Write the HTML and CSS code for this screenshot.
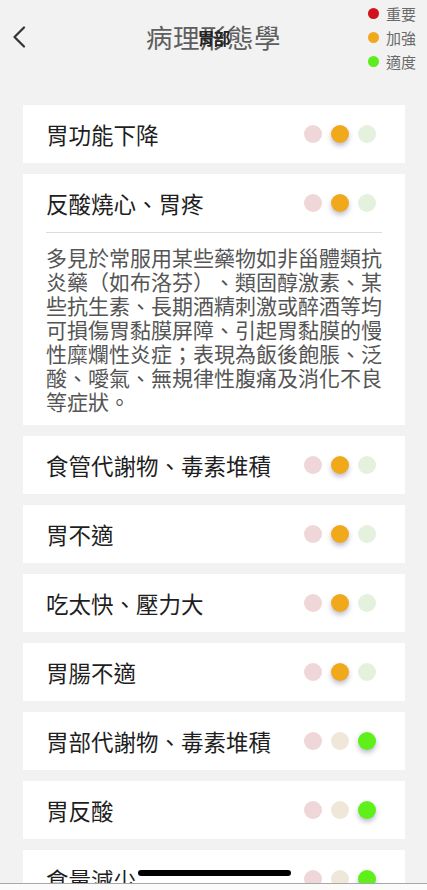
FILE: index.html
```html
<!DOCTYPE html>
<html lang="zh-Hant">
<head>
<meta charset="utf-8">
<link rel="stylesheet" href="styles.css">
</head>
<body>
<div class="screen">
  <header class="header">
    <button class="back" aria-label="back">
      <svg width="14" height="22" viewBox="0 0 14 22"><path d="M12 1.5 L2.5 11 L12 20.5" fill="none" stroke="#333" stroke-width="2.2" stroke-linecap="round" stroke-linejoin="round"/></svg>
    </button>
    <div class="title-wrap">
      <span class="title">病理形態學</span>
      <span class="subtitle">胃部</span>
    </div>
    <ul class="legend">
      <li><span class="ldot red"></span>重要</li>
      <li><span class="ldot orange"></span>加強</li>
      <li><span class="ldot green"></span>適度</li>
    </ul>
  </header>

  <main class="list">
    <section class="card">
      <div class="row"><span class="name">胃功能下降</span><span class="dots"><i class="d r"></i><i class="d o on"></i><i class="d g"></i></span></div>
    </section>
    <section class="card">
      <div class="row"><span class="name">反酸燒心、胃疼</span><span class="dots"><i class="d r"></i><i class="d o on"></i><i class="d g"></i></span></div>
      <div class="divider"></div>
      <p class="desc">多見於常服用某些藥物如非甾體類抗炎藥（如布洛芬）、類固醇激素、某些抗生素、長期酒精刺激或醉酒等均可損傷胃黏膜屏障、引起胃黏膜的慢性糜爛性炎症；表現為飯後飽脹、泛酸、噯氣、無規律性腹痛及消化不良等症狀。</p>
    </section>
    <section class="card">
      <div class="row"><span class="name">食管代謝物、毒素堆積</span><span class="dots"><i class="d r"></i><i class="d o on"></i><i class="d g"></i></span></div>
    </section>
    <section class="card">
      <div class="row"><span class="name">胃不適</span><span class="dots"><i class="d r"></i><i class="d o on"></i><i class="d g"></i></span></div>
    </section>
    <section class="card">
      <div class="row"><span class="name">吃太快、壓力大</span><span class="dots"><i class="d r"></i><i class="d o on"></i><i class="d g"></i></span></div>
    </section>
    <section class="card">
      <div class="row"><span class="name">胃腸不適</span><span class="dots"><i class="d r"></i><i class="d o on"></i><i class="d g"></i></span></div>
    </section>
    <section class="card">
      <div class="row"><span class="name">胃部代謝物、毒素堆積</span><span class="dots"><i class="d r"></i><i class="d o"></i><i class="d g on"></i></span></div>
    </section>
    <section class="card">
      <div class="row"><span class="name">胃反酸</span><span class="dots"><i class="d r"></i><i class="d o"></i><i class="d g on"></i></span></div>
    </section>
    <section class="card">
      <div class="row"><span class="name">食量減少</span><span class="dots"><i class="d r"></i><i class="d o"></i><i class="d g on"></i></span></div>
    </section>
  </main>

  <div class="bottom-bar"></div>
  <div class="home-indicator"></div>
</div>
</body>
</html>
```

FILE: styles.css
```css
* { box-sizing: border-box; }
html, body {
  margin: 0;
  padding: 0;
  background: #f2f2f2;
  font-family: "Noto Sans CJK TC", "Noto Sans", sans-serif;
}
.screen {
  width: 427px;
  height: 890px;
  overflow: hidden;
  position: relative;
}
.header {
  height: 105px;
  position: relative;
  display: flex;
  align-items: flex-start;
}
.back {
  border: 0;
  background: none;
  padding: 0;
  margin: 26px 0 0 12px;
  width: 14px;
  height: 22px;
  display: block;
}
.back svg { display: block; }
.title-wrap {
  position: absolute;
  left: 0;
  right: 0;
  top: 20px;
  text-align: center;
  pointer-events: none;
}
.title {
  font-size: 26.5px;
  line-height: 34px;
  color: #5e5e5e;
  letter-spacing: 0.5px;
}
.subtitle {
  position: absolute;
  left: 0;
  right: 0;
  top: 8px;
  text-align: center;
  font-size: 17px;
  line-height: 20px;
  font-weight: 700;
  color: #222;
  letter-spacing: -1px;
}
.legend {
  position: absolute;
  top: 1px;
  right: 11px;
  margin: 0;
  padding: 0;
  list-style: none;
}
.legend li {
  display: flex;
  align-items: center;
  gap: 7px;
  height: 24px;
  font-size: 15px;
  color: #6a6a6a;
}
.ldot {
  width: 11px;
  height: 11px;
  border-radius: 50%;
  display: inline-block;
}
.ldot.red { background: #d1121b; }
.ldot.orange { background: #f0a81d; }
.ldot.green { background: #5ded1f; }

.list {
  display: flex;
  flex-direction: column;
  gap: 11px;
  padding: 0 22px 0 23px;
}
.card {
  background: #fff;
}
.row {
  height: 58px;
  display: flex;
  align-items: center;
  justify-content: space-between;
  padding: 0 29px 0 23px;
}
.name {
  font-size: 22.5px;
  color: #1e1e1e;
  line-height: 30px;
  white-space: nowrap;
}
.dots {
  display: flex;
  gap: 9px;
}
.d {
  width: 18px;
  height: 18px;
  border-radius: 50%;
  display: block;
}
.d.r { background: #efd6d8; }
.d.o { background: #efe7d8; }
.d.g { background: #e3f1dd; }
.d.o.on { background: #f1a91c; box-shadow: 0 3px 5px rgba(70, 70, 130, 0.35); }
.d.g.on { background: #5ff01a; box-shadow: 0 3px 5px rgba(70, 70, 130, 0.35); }

.divider {
  height: 1px;
  background: #dcdcdc;
  margin: 0 23px;
}
.desc {
  margin: 0;
  padding: 12px 23px 12px 23px;
  font-size: 21px;
  line-height: 24px;
  color: #555;
  width: 382px;
  text-spacing-trim: space-all;
  font-feature-settings: "fwid" 1;
}

.bottom-bar {
  position: absolute;
  left: 0;
  right: 0;
  bottom: 0;
  height: 7px;
  background: #fbfbfb;
  border-top: 1px solid #a8a8a8;
}
.home-indicator {
  position: absolute;
  left: 138px;
  top: 870px;
  width: 153px;
  height: 6px;
  border-radius: 3px;
  background: #000;
}
```
